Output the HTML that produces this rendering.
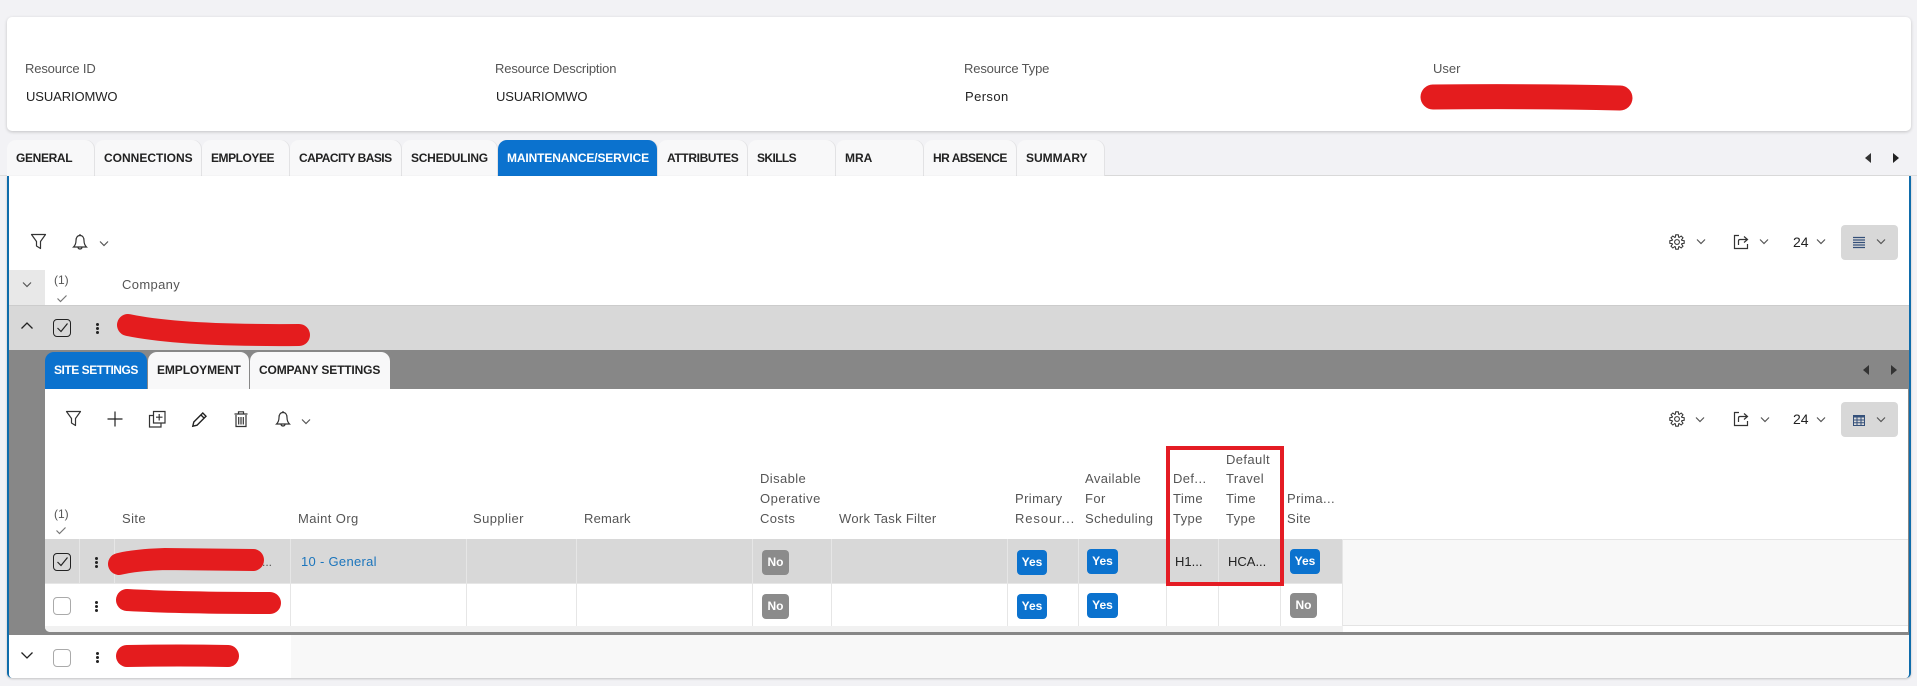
<!DOCTYPE html>
<html><head><meta charset="utf-8"><title>Resource</title>
<style>
html,body{margin:0;padding:0;width:1917px;height:686px;overflow:hidden;background:#f2f2f5;font-family:"Liberation Sans",sans-serif;color:#222}
div,span{position:absolute;box-sizing:border-box}
.t{white-space:nowrap;line-height:20px;font-size:13px;color:#222}
.l{color:#555;letter-spacing:-.15px}
.h{color:#555;font-size:13px;line-height:20px;white-space:nowrap;letter-spacing:.4px}
.tab{top:140px;height:36px;background:#f8f8f9;border-radius:9px 9px 0 0;font-size:12px;font-weight:bold;color:#222;line-height:36px;padding-left:9px;white-space:nowrap;box-shadow:1px 0 0 #e2e2e4}
.tab2{top:352px;height:37px;background:#f8f8f9;border-radius:9px 9px 0 0;font-size:12px;font-weight:bold;color:#222;line-height:37px;padding-left:9px;white-space:nowrap}
.on{background:#0b72ce;color:#fff}
.cb{width:18px;height:18px;border:1px solid #aaa;border-radius:4px;background:#fff}
.cbk{border-color:#222;background:transparent}
.b{height:25px;border-radius:4px;color:#fff;font-weight:bold;font-size:12px;line-height:25px;text-align:center}
.y{background:#0b72ce}.n{background:#8b8b8b}
.v{width:1px;background:#e6e6e6}
.sel{background:#d8d8d8}
svg{position:absolute;overflow:visible;fill:none;stroke:#333;stroke-width:1.2}
.dot{width:3px;height:3px;background:#222;border-radius:50%}
</style></head><body>
<svg width="0" height="0" style="position:absolute"><defs>
<symbol id="chev" viewBox="0 0 10 6" overflow="visible"><path d="M1 .5 5 4.500 9 .5" stroke="#555" fill="none"/></symbol>
<symbol id="funnel" viewBox="0 0 15 15" overflow="visible"><path d="M.5 .5H14.500L9.500 7.500V14.500L5.500 12V7.500Z" fill="none" stroke="#333" stroke-linejoin="round"/></symbol>
<symbol id="bell" viewBox="0 0 14 16" overflow="visible"><path d="M7 1.500C4.500 1.500 3 3.500 3 6.500 3 9.500 2 11.500 .5 13H13.500C12 11.500 11 9.500 11 6.500 11 3.500 9.500 1.500 7 1.500ZM5 13.500C5.500 15.500 8.500 15.500 9 13.500M7 0V1.500" fill="none" stroke="#333"/></symbol>
<symbol id="gear" viewBox="0 0 20 20" overflow="visible"><g fill="none" stroke="#333" stroke-width="1.300"><path d="M7.780 4.640 8.400 1H11.600L12.220 4.640"/><path transform="rotate(45 10 10)" d="M7.780 4.640 8.400 1H11.600L12.220 4.640"/><path transform="rotate(90 10 10)" d="M7.780 4.640 8.400 1H11.600L12.220 4.640"/><path transform="rotate(135 10 10)" d="M7.780 4.640 8.400 1H11.600L12.220 4.640"/><path transform="rotate(180 10 10)" d="M7.780 4.640 8.400 1H11.600L12.220 4.640"/><path transform="rotate(225 10 10)" d="M7.780 4.640 8.400 1H11.600L12.220 4.640"/><path transform="rotate(270 10 10)" d="M7.780 4.640 8.400 1H11.600L12.220 4.640"/><path transform="rotate(315 10 10)" d="M7.780 4.640 8.400 1H11.600L12.220 4.640"/><circle cx="10" cy="10" r="3"/></g></symbol>
<symbol id="exp" viewBox="0 0 14 14" overflow="visible"><path d="M5 .5H.5V13.500H13.500V9M4.500 10V6C4.500 5 5 4.500 6 4.500H13M10 1.500 13.500 4.500 10 7.500" fill="none" stroke="#333"/></symbol>
</defs></svg>

<!-- header card -->
<div style="left:7px;top:17px;width:1904px;height:114px;background:#fff;border-radius:5px;box-shadow:0 1px 3px rgba(0,0,0,.2)"></div>
<span class="t l" style="left:25px;top:59px">Resource ID</span>
<span class="t" style="left:26px;top:87px;letter-spacing:-.1px">USUARIOMWO</span>
<span class="t l" style="left:495px;top:59px">Resource Description</span>
<span class="t" style="left:496px;top:87px;letter-spacing:-.1px">USUARIOMWO</span>
<span class="t l" style="left:964px;top:59px">Resource Type</span>
<span class="t" style="left:965px;top:87px;letter-spacing:.4px">Person</span>
<span class="t l" style="left:1433px;top:59px;letter-spacing:0">User</span>
<svg style="left:0;top:0" width="1917" height="686"><path d="M1433 97Q1530 96 1620 98" stroke="#e41c1e" stroke-width="25" stroke-linecap="round"/></svg>

<!-- tabs -->
<div style="left:0;top:175px;width:1917px;height:1px;background:#ddd"></div>
<div class="tab" style="left:7px;width:87px;letter-spacing:-.35px">GENERAL</div>
<div class="tab" style="left:95px;width:106px">CONNECTIONS</div>
<div class="tab" style="left:202px;width:87px;letter-spacing:-.45px">EMPLOYEE</div>
<div class="tab" style="left:290px;width:111px;letter-spacing:-.55px">CAPACITY BASIS</div>
<div class="tab" style="left:402px;width:95px;letter-spacing:-.25px">SCHEDULING</div>
<div class="tab on" style="left:498px;width:159px;letter-spacing:-.13px">MAINTENANCE/SERVICE</div>
<div class="tab" style="left:658px;width:89px;letter-spacing:-.37px">ATTRIBUTES</div>
<div class="tab" style="left:748px;width:87px;letter-spacing:-.6px">SKILLS</div>
<div class="tab" style="left:836px;width:87px">MRA</div>
<div class="tab" style="left:924px;width:92px;letter-spacing:-.5px">HR ABSENCE</div>
<div class="tab" style="left:1017px;width:87px">SUMMARY</div>
<svg style="left:1862px;top:153px" width="40" height="11"><path d="M9 0V10L3 5Z" fill="#333" stroke="none"/><path d="M31 0V10L37 5Z" fill="#222" stroke="none"/></svg>

<!-- main panel -->
<div style="left:7px;top:176px;width:1904px;height:502px;background:#fff;border-left:2px solid #0f6cab;border-right:2px solid #0f6cab;border-radius:0 0 5px 5px;box-shadow:0 1px 2px rgba(0,0,0,.2)"></div>

<!-- toolbar -->
<svg style="left:31px;top:234px" width="15" height="15"><use href="#funnel" width="15" height="15"/></svg>
<svg style="left:73px;top:234px" width="14" height="16"><use href="#bell" width="14" height="16"/></svg>
<svg style="left:99px;top:241px" width="10" height="6"><use href="#chev" width="10" height="6"/></svg>
<svg style="left:1669px;top:234px" width="16" height="16"><use href="#gear" width="16" height="16"/></svg>
<svg style="left:1696px;top:239px" width="10" height="6"><use href="#chev" width="10" height="6"/></svg>
<svg style="left:1734px;top:235px" width="14" height="14"><use href="#exp" width="14" height="14"/></svg>
<svg style="left:1759px;top:239px" width="10" height="6"><use href="#chev" width="10" height="6"/></svg>
<span class="t" style="left:1793px;top:232px;font-size:14px">24</span>
<svg style="left:1816px;top:239px" width="10" height="6"><use href="#chev" width="10" height="6"/></svg>
<div style="left:1841px;top:225px;width:57px;height:35px;background:#d8d8d8;border-radius:4px"></div>
<svg style="left:1853px;top:237px" width="12" height="12"><path d="M0 .5H12M0 3H12M0 5.500H12M0 8H12M0 10.500H12" stroke="#34507a"/></svg>
<svg style="left:1876px;top:239px" width="10" height="6"><use href="#chev" width="10" height="6"/></svg>

<!-- company header -->
<div style="left:9px;top:270px;width:36px;height:35px;background:#e8e8e8"></div>
<svg style="left:22px;top:282px" width="10" height="6"><use href="#chev" width="10" height="6"/></svg>
<span class="t l" style="left:54px;top:270px;font-size:12px;letter-spacing:0">(1)</span>
<svg style="left:57px;top:295px" width="10" height="7"><path d="M.5 3.500 3.500 6.500 9.500.5" stroke="#777"/></svg>
<span class="t l" style="left:122px;top:275px;letter-spacing:.35px">Company</span>

<!-- selected row -->
<div class="sel" style="left:9px;top:305px;width:1900px;height:45px;border-top:1px solid #ccc"></div>
<svg style="left:21px;top:322px" width="12" height="7"><path d="M.5 6.500 6 1 11.500 6.500" stroke="#222" stroke-width="1.300"/></svg>
<div class="cb cbk" style="left:53px;top:319px"></div>
<svg style="left:57px;top:323px" width="11" height="10"><path d="M.5 5 4 8.500 10.500.5" stroke="#222"/></svg>
<div class="dot" style="left:96px;top:323px"></div><div class="dot" style="left:96px;top:327px"></div><div class="dot" style="left:96px;top:331px"></div>
<svg style="left:0;top:0" width="1917" height="686"><path d="M128 325Q180 336 299 335" stroke="#e41c1e" stroke-width="22" stroke-linecap="round"/></svg>

<!-- nested band -->
<div style="left:9px;top:350px;width:1900px;height:285px;background:#878787"></div>
<div class="tab2 on" style="left:45px;width:102px;letter-spacing:-.47px">SITE SETTINGS</div>
<div class="tab2" style="left:148px;width:101px;letter-spacing:-.1px">EMPLOYMENT</div>
<div class="tab2" style="left:250px;width:140px;letter-spacing:-.15px">COMPANY SETTINGS</div>
<svg style="left:1860px;top:365px" width="40" height="11"><path d="M9 0V10L3 5Z" fill="#333" stroke="none"/><path d="M31 0V10L37 5Z" fill="#333" stroke="none"/></svg>

<!-- inner panel -->
<div style="left:45px;top:389px;width:1863px;height:243px;background:#fff;border-radius:0 0 0 5px"></div>

<svg style="left:66px;top:411px" width="15" height="15"><use href="#funnel" width="15" height="15"/></svg>
<svg style="left:107px;top:411px" width="16" height="16"><path d="M8 .5V15.500M.5 8H15.500" stroke="#222"/></svg>
<svg style="left:149px;top:411px" width="17" height="17"><path d="M4.500 .5H16V12H4.500ZM4.500 4.500H.5V16H12V12M10.200 3V9.500M7 6.200H13.500" stroke="#333"/></svg>
<svg style="left:192px;top:412px" width="15" height="15"><path d="M.8 14.200 1.800 10 10.800 1 14 4.200 5 13.200ZM9 3 12 6" stroke="#222" stroke-width="1.400"/></svg>
<svg style="left:234px;top:411px" width="14" height="16"><path d="M2 4V15.500H12V4M.5 3H13.500M4.500 2.500V.8H9.500V2.500M4.700 6V13.500M7 6V13.500M9.300 6V13.500" stroke="#333" stroke-width="1.200"/></svg>
<svg style="left:276px;top:411px" width="14" height="16"><use href="#bell" width="14" height="16"/></svg>
<svg style="left:301px;top:419px" width="10" height="6"><use href="#chev" width="10" height="6"/></svg>
<svg style="left:1669px;top:411px" width="16" height="16"><use href="#gear" width="16" height="16"/></svg>
<svg style="left:1695px;top:417px" width="10" height="6"><use href="#chev" width="10" height="6"/></svg>
<svg style="left:1734px;top:412px" width="14" height="14"><use href="#exp" width="14" height="14"/></svg>
<svg style="left:1760px;top:417px" width="10" height="6"><use href="#chev" width="10" height="6"/></svg>
<span class="t" style="left:1793px;top:409px;font-size:14px">24</span>
<svg style="left:1816px;top:417px" width="10" height="6"><use href="#chev" width="10" height="6"/></svg>
<div style="left:1841px;top:402px;width:57px;height:35px;background:#d8d8d8;border-radius:4px"></div>
<svg style="left:1853px;top:415px" width="12" height="11"><path d="M0 0H12V2.500H0Z" fill="#34507a" stroke="none"/><path d="M.5 .5H11.500V10.500H.5ZM.5 5H11.500M.5 7.700H11.500M4 .5V10.500M8 .5V10.500" stroke="#34507a" stroke-width="1"/></svg>
<svg style="left:1876px;top:417px" width="10" height="6"><use href="#chev" width="10" height="6"/></svg>

<!-- table header -->
<span class="t l" style="left:54px;top:504px;font-size:12px;letter-spacing:0">(1)</span>
<svg style="left:56px;top:527px" width="10" height="7"><path d="M.5 3.500 3.500 6.500 9.500.5" stroke="#777"/></svg>
<span class="h" style="left:122px;top:509px">Site</span>
<span class="h" style="left:298px;top:509px">Maint Org</span>
<span class="h" style="left:473px;top:509px">Supplier</span>
<span class="h" style="left:584px;top:509px;letter-spacing:.2px">Remark</span>
<span class="h" style="left:760px;top:469px">Disable</span>
<span class="h" style="left:760px;top:489px;letter-spacing:.5px">Operative</span>
<span class="h" style="left:760px;top:509px">Costs</span>
<span class="h" style="left:839px;top:509px;letter-spacing:.3px">Work Task Filter</span>
<span class="h" style="left:1015px;top:489px">Primary</span>
<span class="h" style="left:1015px;top:509px;letter-spacing:.9px">Resour...</span>
<span class="h" style="left:1085px;top:469px">Available</span>
<span class="h" style="left:1085px;top:489px">For</span>
<span class="h" style="left:1085px;top:509px">Scheduling</span>
<span class="h" style="left:1173px;top:469px">Def...</span>
<span class="h" style="left:1173px;top:489px">Time</span>
<span class="h" style="left:1173px;top:509px">Type</span>
<span class="h" style="left:1226px;top:450px">Default</span>
<span class="h" style="left:1226px;top:469px">Travel</span>
<span class="h" style="left:1226px;top:489px">Time</span>
<span class="h" style="left:1226px;top:509px">Type</span>
<span class="h" style="left:1287px;top:489px">Prima...</span>
<span class="h" style="left:1287px;top:509px">Site</span>

<!-- table body -->
<div style="left:1343px;top:539px;width:565px;height:87px;background:#f8f8f8;border-top:1px solid #e4e4e4;border-bottom:1px solid #e4e4e4"></div>
<div style="left:45px;top:626px;width:1298px;height:6px;background:#f1f1f1;border-radius:0 0 0 5px"></div>
<div class="sel" style="left:45px;top:539px;width:1298px;height:44px"></div>
<div style="left:45px;top:583px;width:1298px;height:1px;background:#e6e6e6"></div>
<div class="v" style="left:79px;top:539px;height:44px"></div>
<div class="v" style="left:114px;top:539px;height:44px"></div>
<div class="v" style="left:290px;top:539px;height:87px"></div>
<div class="v" style="left:466px;top:539px;height:87px"></div>
<div class="v" style="left:576px;top:539px;height:87px"></div>
<div class="v" style="left:752px;top:539px;height:87px"></div>
<div class="v" style="left:831px;top:539px;height:87px"></div>
<div class="v" style="left:1007px;top:539px;height:87px"></div>
<div class="v" style="left:1078px;top:539px;height:87px"></div>
<div class="v" style="left:1166px;top:539px;height:87px"></div>
<div class="v" style="left:1218px;top:539px;height:87px"></div>
<div class="v" style="left:1280px;top:539px;height:87px"></div>
<div class="v" style="left:1342px;top:539px;height:87px"></div>

<div class="cb cbk" style="left:53px;top:553px"></div>
<svg style="left:57px;top:557px" width="11" height="10"><path d="M.5 5 4 8.500 10.500.5" stroke="#222"/></svg>
<div class="dot" style="left:95px;top:557px"></div><div class="dot" style="left:95px;top:561px"></div><div class="dot" style="left:95px;top:565px"></div>
<span class="t" style="left:262px;top:552px;color:#555;font-size:12px">...</span>
<span class="t" style="left:301px;top:552px;color:#1b75bc;letter-spacing:.3px">10 - General</span>
<div class="b n" style="left:762px;top:550px;width:27px">No</div>
<div class="b y" style="left:1017px;top:550px;width:30px">Yes</div>
<div class="b y" style="left:1087px;top:549px;width:31px">Yes</div>
<span class="t" style="left:1175px;top:552px">H1...</span>
<span class="t" style="left:1228px;top:552px">HCA...</span>
<div class="b y" style="left:1290px;top:549px;width:30px">Yes</div>

<div class="cb" style="left:53px;top:597px"></div>
<div class="dot" style="left:95px;top:601px"></div><div class="dot" style="left:95px;top:605px"></div><div class="dot" style="left:95px;top:609px"></div>
<div class="b n" style="left:762px;top:594px;width:27px">No</div>
<div class="b y" style="left:1017px;top:594px;width:30px">Yes</div>
<div class="b y" style="left:1087px;top:593px;width:31px">Yes</div>
<div class="b n" style="left:1290px;top:593px;width:27px">No</div>

<!-- bottom row -->
<div style="left:9px;top:635px;width:1900px;height:43px;background:#f8f8f8;border-radius:0 0 4px 4px"></div>
<div style="left:9px;top:635px;width:282px;height:43px;background:#fff;border-radius:0 0 0 4px"></div>
<svg style="left:21px;top:652px" width="12" height="7"><path d="M.5.5 6 6 11.500.5" stroke="#222" stroke-width="1.300"/></svg>
<div class="cb" style="left:53px;top:649px"></div>
<div class="dot" style="left:96px;top:652px"></div><div class="dot" style="left:96px;top:656px"></div><div class="dot" style="left:96px;top:660px"></div>

<svg style="left:0;top:0" width="1917" height="686">
<path d="M119 564Q135 560 165 559L253 560" stroke="#e41c1e" stroke-width="22" stroke-linecap="round"/>
<path d="M127 600Q180 603 270 603" stroke="#e41c1e" stroke-width="22" stroke-linecap="round"/>
<path d="M127 656Q180 655 228 656" stroke="#e41c1e" stroke-width="22" stroke-linecap="round"/>
</svg>

<!-- highlight -->
<div style="left:1166px;top:446px;width:118px;height:140px;border:4px solid #e41c24"></div>
</body></html>
